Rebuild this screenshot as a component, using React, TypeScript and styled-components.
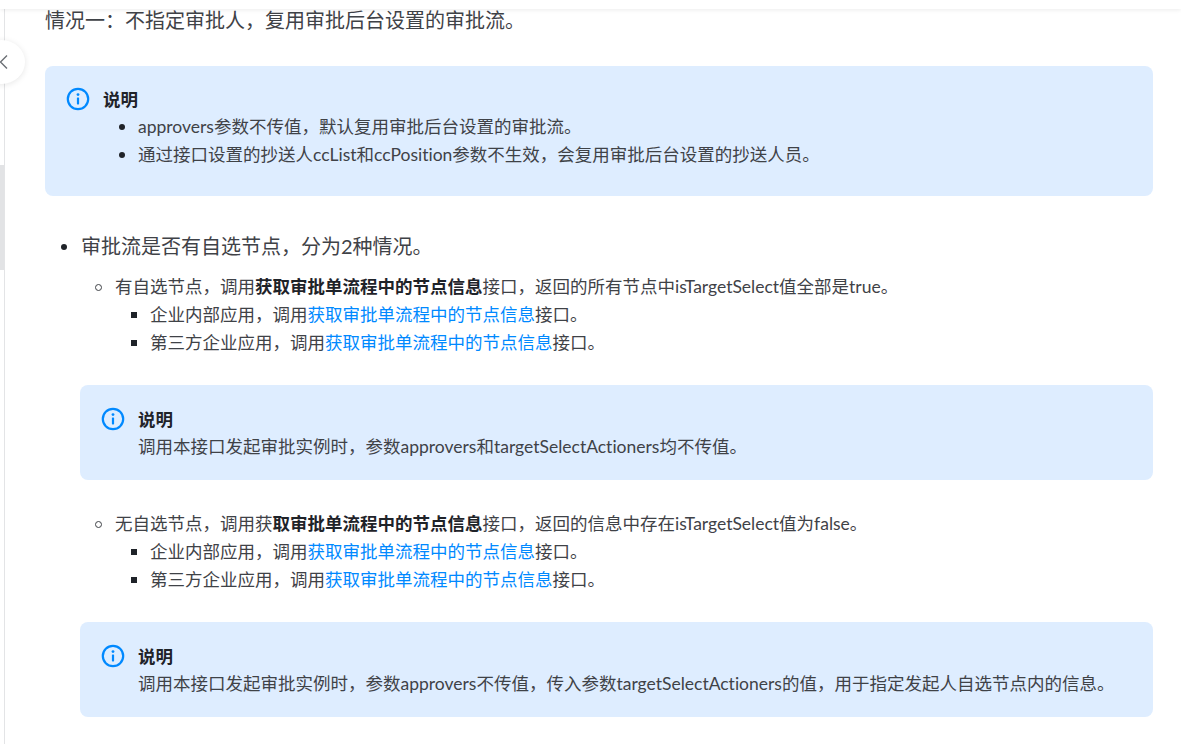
import React from "react";
import styled, { createGlobalStyle } from "styled-components";

const GlobalStyle = createGlobalStyle`
  html, body {
    margin: 0;
    height: 100%;
    overflow: hidden;
    background: #fff;
  }
  body {
    font-family: Lato, "Noto Sans CJK SC", sans-serif;
    font-variant-ligatures: none;
    color: #3f4247;
  }
  ul {
    list-style: none;
  }
  li {
    position: relative;
  }
`;

function InfoIcon() {
  return (
    <IconBox viewBox="0 0 24 24">
      <circle cx="12" cy="12" r="10.2" fill="none" stroke="#0089ff" strokeWidth="2.2" />
      <rect x="10.9" y="10.4" width="2.2" height="7" rx="0.6" fill="#0089ff" />
      <circle cx="12" cy="7.6" r="1.4" fill="#0089ff" />
    </IconBox>
  );
}

function Note({ nested, children }: { nested?: boolean; children: React.ReactNode }) {
  return (
    <Callout $nested={nested}>
      <InfoIcon />
      <CalloutBody>
        <CalloutTitle>说明</CalloutTitle>
        {children}
      </CalloutBody>
    </Callout>
  );
}

function AppLists({ prefix }: { prefix: string }) {
  return (
    <ThirdList>
      <li>
        企业内部应用，调用<DocLink href="#">{prefix}</DocLink>接口。
      </li>
      <li>
        第三方企业应用，调用<DocLink href="#">{prefix}</DocLink>接口。
      </li>
    </ThirdList>
  );
}

export default function App() {
  const nodeInfo = "获取审批单流程中的节点信息";
  return (
    <Page>
      <GlobalStyle />
      <TopBar />
      <Sidebar>
        <ScrollThumb />
      </Sidebar>
      <CollapseButton>
        <svg width="14" height="20" viewBox="0 0 14 20">
          <path d="M8 3.5 L1.5 10 L8 16.5" fill="none" stroke="#6b6f75" strokeWidth="1.4" />
        </svg>
      </CollapseButton>
      <Main>
        <Lead>情况一：不指定审批人，复用审批后台设置的审批流。</Lead>
        <Note>
          <CalloutList>
            <li>approvers参数不传值，默认复用审批后台设置的审批流。</li>
            <li>通过接口设置的抄送人ccList和ccPosition参数不生效，会复用审批后台设置的抄送人员。</li>
          </CalloutList>
        </Note>
        <TopList>
          <li>
            审批流是否有自选节点，分为2种情况。
            <SecondList>
              <li>
                有自选节点，调用<strong>{nodeInfo}</strong>接口，返回的所有节点中isTargetSelect值全部是true。
                <AppLists prefix={nodeInfo} />
              </li>
            </SecondList>
            <Note nested>
              <CalloutText>调用本接口发起审批实例时，参数approvers和targetSelectActioners均不传值。</CalloutText>
            </Note>
            <SecondList>
              <li>
                无自选节点，调用获<strong>取审批单流程中的节点信息</strong>接口，返回的信息中存在isTargetSelect值为false。
                <AppLists prefix={nodeInfo} />
              </li>
            </SecondList>
            <Note nested>
              <CalloutText>
                调用本接口发起审批实例时，参数approvers不传值，传入参数targetSelectActioners的值，用于指定发起人自选节点内的信息。
              </CalloutText>
            </Note>
          </li>
        </TopList>
      </Main>
    </Page>
  );
}

const Page = styled.div`
  display: flex;
  height: 744px;
  overflow: hidden;
`;

const TopBar = styled.div`
  position: fixed;
  top: 0;
  left: 0;
  right: 0;
  height: 9px;
  background: #fff;
  box-shadow: 0 1px 4px rgba(0, 0, 0, 0.08);
`;

const Sidebar = styled.div`
  flex: 0 0 5px;
  box-sizing: border-box;
  padding-top: 165px;
  border-right: 1px solid #e3e4e6;
`;

const ScrollThumb = styled.div`
  width: 4px;
  height: 105px;
  background: #e2e3e5;
`;

const CollapseButton = styled.div`
  position: fixed;
  left: -22px;
  top: 40px;
  width: 47px;
  height: 44px;
  display: flex;
  align-items: center;
  justify-content: flex-end;
  padding-right: 12px;
  box-sizing: border-box;
  border-radius: 50%;
  background: #fff;
  box-shadow: 0 1px 6px rgba(0, 0, 0, 0.1);
`;

const Main = styled.main`
  flex: 1;
  min-width: 0;
  padding: 6px 28px 0 40px;
`;

const Lead = styled.p`
  margin: 0 0 32px;
  font-size: 20px;
  line-height: 28px;
`;

const Callout = styled.div<{ $nested?: boolean }>`
  display: flex;
  gap: 13px;
  box-sizing: border-box;
  padding: ${({ $nested }) => ($nested ? "21px 21px 19px" : "20px 21px")};
  margin-left: ${({ $nested }) => ($nested ? "-1px" : "0")};
  margin-top: ${({ $nested }) => ($nested ? "28px" : "0")};
  margin-bottom: ${({ $nested }) => ($nested ? "30px" : "0")};
  background: #deedff;
  border-radius: 8px;
  font-size: 17.5px;
  line-height: 28px;
`;

const IconBox = styled.svg`
  flex: none;
  width: 24px;
  height: 24px;
  margin-top: 1px;
`;

const CalloutBody = styled.div`
  flex: 1;
  min-width: 0;
`;

const CalloutTitle = styled.div`
  font-weight: 700;
  line-height: 27px;
  color: #1f2329;
`;

const CalloutText = styled.div``;

const CalloutList = styled.ul`
  margin: 0 0 7px;
  padding: 0 0 0 35px;

  > li::before {
    content: "";
    position: absolute;
    left: -19px;
    top: 11px;
    width: 6px;
    height: 6px;
    border-radius: 50%;
    background: #1f2329;
  }
`;

const TopList = styled.ul`
  margin: 36px 0 0;
  padding: 0 0 0 36px;
  font-size: 20px;
  line-height: 28px;

  > li::before {
    content: "";
    position: absolute;
    left: -20px;
    top: 12px;
    width: 6px;
    height: 6px;
    border-radius: 50%;
    background: #1f2329;
  }
`;

const SecondList = styled.ul`
  margin: 13px 0 0;
  padding: 0 0 0 34px;
  font-size: 17.5px;
  line-height: 28px;

  > li::before {
    content: "";
    position: absolute;
    left: -20px;
    top: 11px;
    width: 7px;
    height: 7px;
    box-sizing: border-box;
    border: 1px solid #3f4247;
    border-radius: 50%;
  }

  strong {
    font-weight: 700;
    color: #1f2329;
  }
`;

const ThirdList = styled.ul`
  margin: 0;
  padding: 0 0 0 35px;

  > li::before {
    content: "";
    position: absolute;
    left: -19px;
    top: 11px;
    width: 6px;
    height: 6px;
    background: #1f2329;
  }
`;

const DocLink = styled.a`
  color: #0089ff;
  text-decoration: none;
`;
